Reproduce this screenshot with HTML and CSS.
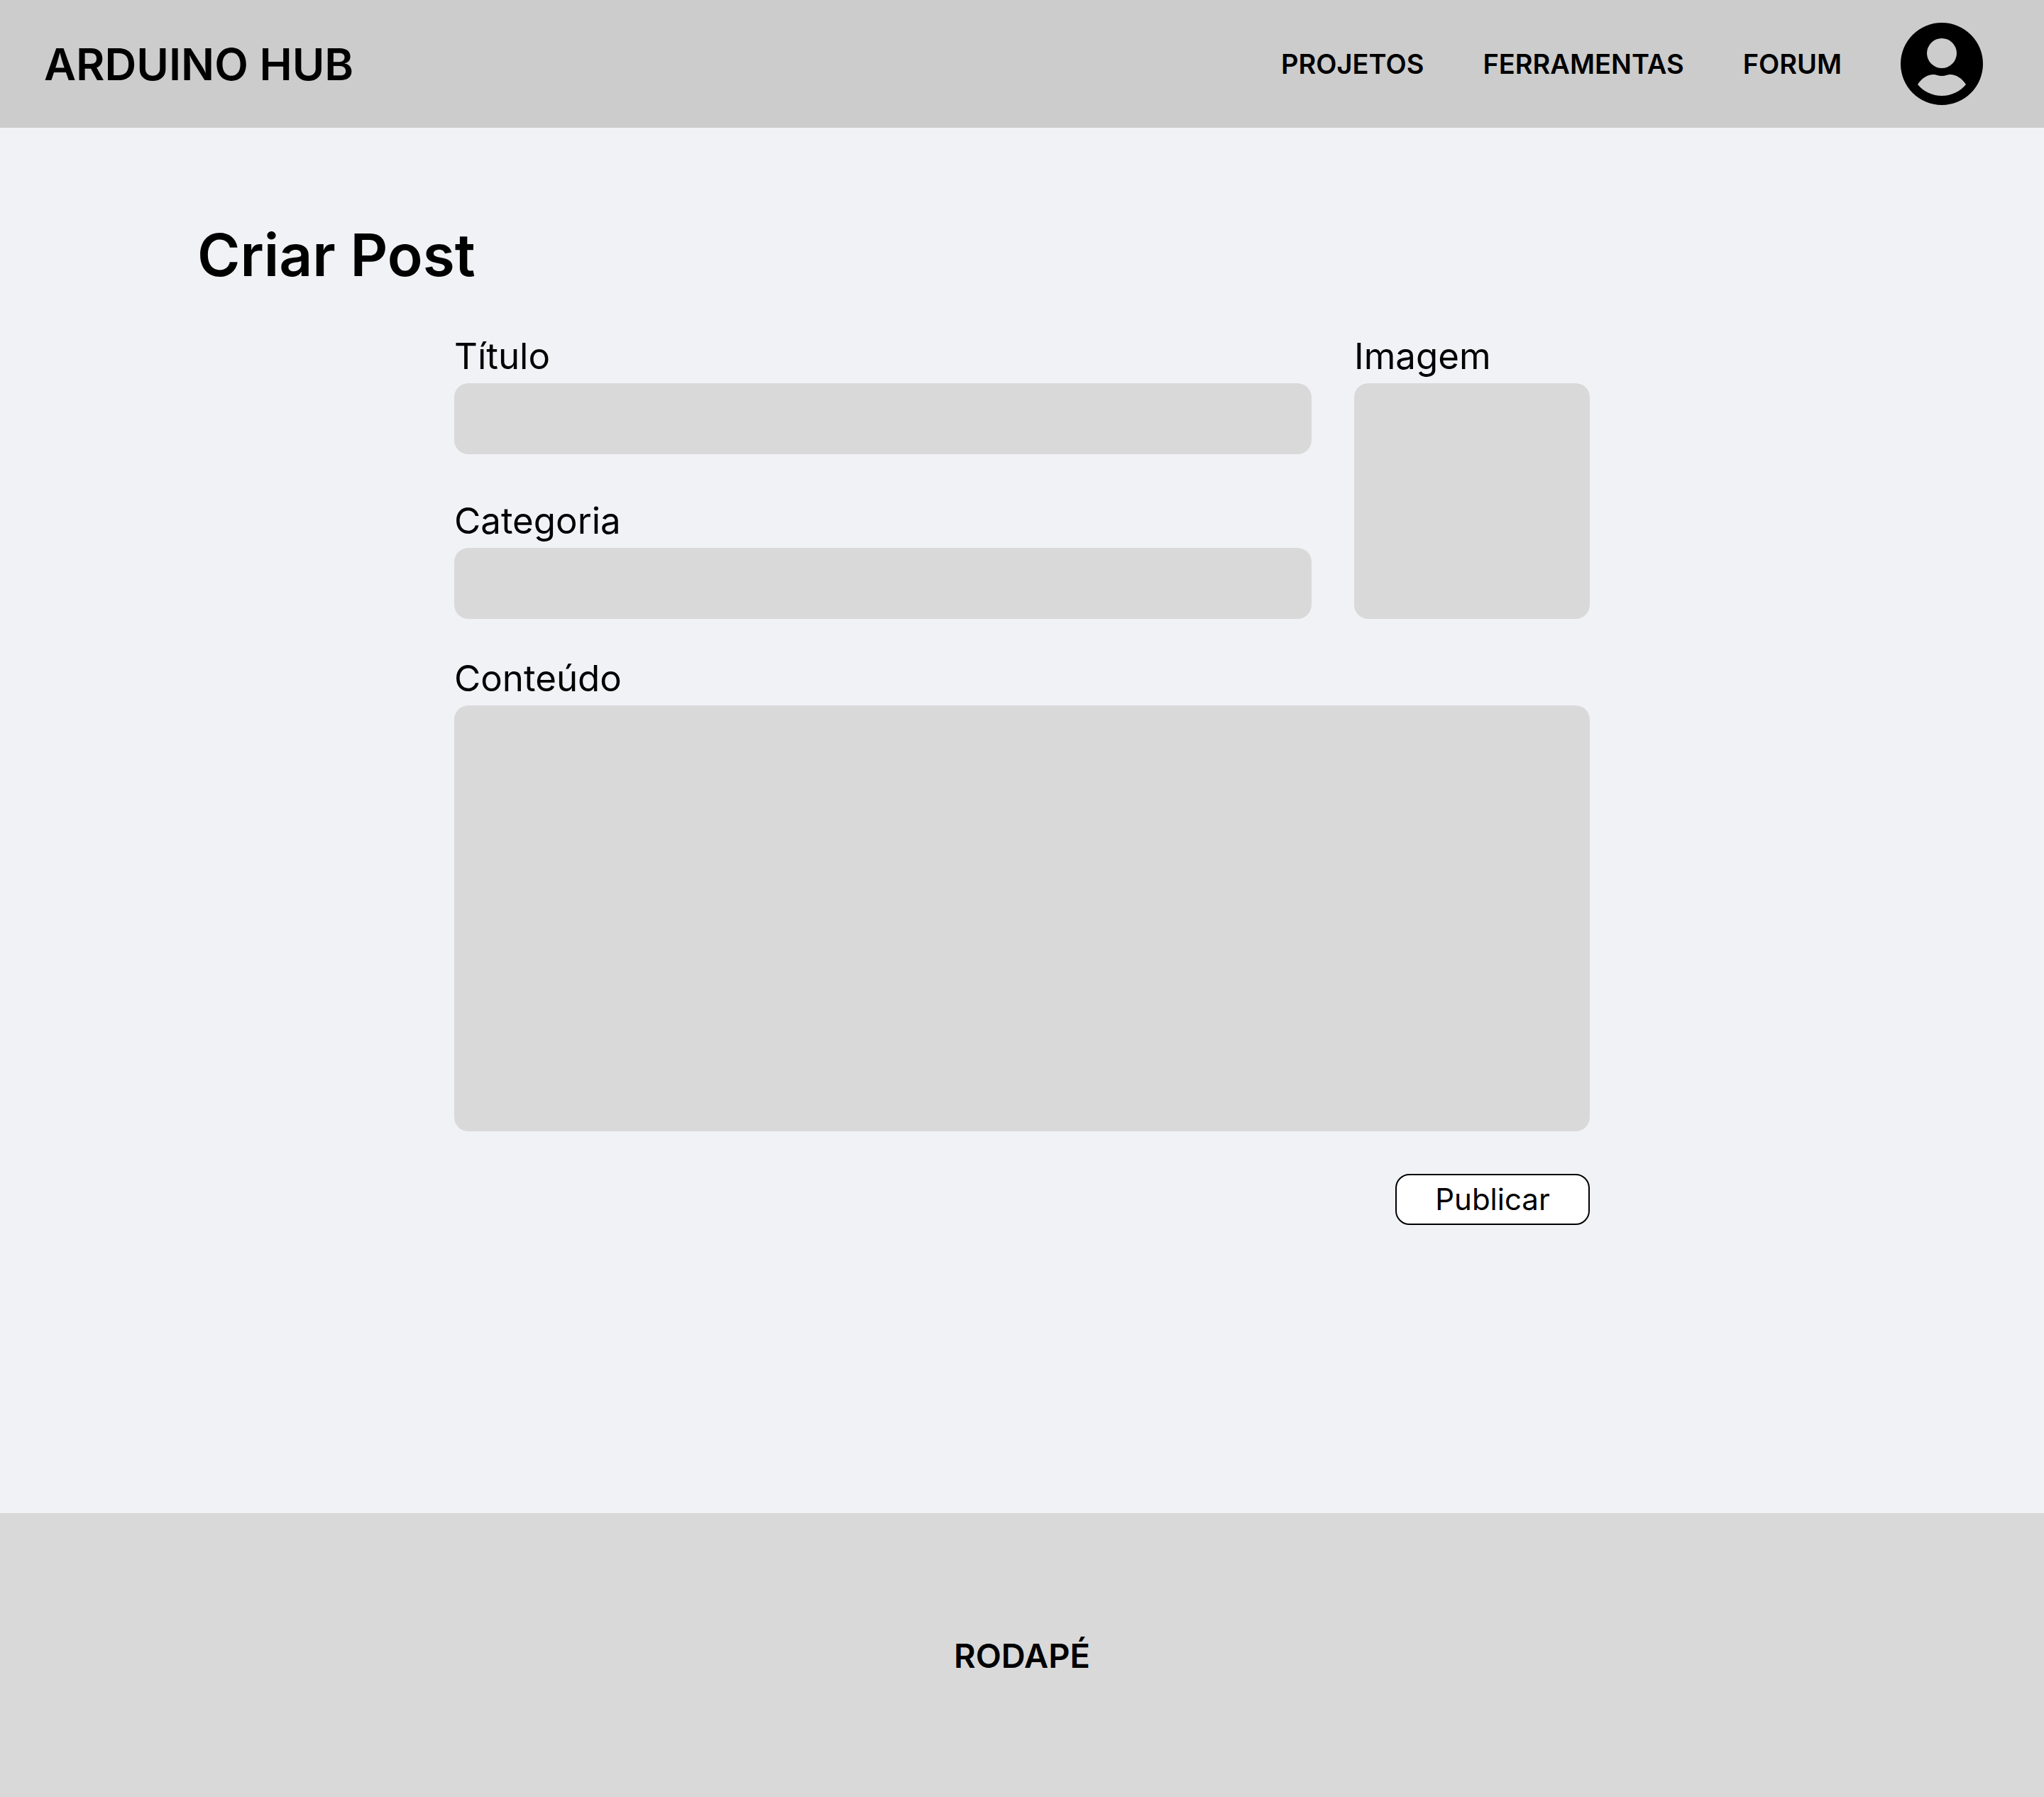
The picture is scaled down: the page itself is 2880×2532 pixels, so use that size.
FILE: index.html
```html
<!DOCTYPE html>
<html lang="pt-BR">
<head>
  <meta charset="utf-8">
  <meta name="viewport" content="width=device-width, initial-scale=1">
  <title>Criar Post - Arduino Hub</title>
  <link rel="stylesheet" href="styles.css">
</head>
<body>
  <header class="header">
    <a class="logo" href="#">ARDUINO HUB</a>
    <nav class="nav">
      <a class="nav-link" href="#">PROJETOS</a>
      <a class="nav-link" href="#">FERRAMENTAS</a>
      <a class="nav-link" href="#">FORUM</a>
      <a class="profile" href="#" aria-label="Perfil">
        <svg class="profile-icon" viewBox="0 0 116 116" aria-hidden="true">
          <path fill-rule="evenodd" d="M58 0a58 58 0 1 0 0 116a58 58 0 1 0 0-116ZM58 22a21 21 0 1 1 0 42a21 21 0 1 1 0-42ZM24 87C30 78 38 73 46 73C50 73 53 75 58 75C63 75 66 73 70 73C78 73 86 78 92 87C84 97 71 103 58 103C45 103 32 97 24 87Z"/>
        </svg>
      </a>
    </nav>
  </header>

  <main class="main">
    <h1 class="title">Criar Post</h1>
    <form class="form">
      <div class="details">
        <div class="fields">
          <div class="field">
            <label class="label" for="titulo">Título</label>
            <input class="control" id="titulo" type="text">
          </div>
          <div class="field">
            <label class="label" for="categoria">Categoria</label>
            <input class="control" id="categoria" type="text">
          </div>
        </div>
        <div class="field image-field">
          <label class="label" for="imagem">Imagem</label>
          <div class="upload">
            <input class="upload-input" id="imagem" type="file" accept="image/*">
          </div>
        </div>
      </div>
      <div class="field">
        <label class="label" for="conteudo">Conteúdo</label>
        <textarea class="control content" id="conteudo"></textarea>
      </div>
      <button class="submit" type="submit">Publicar</button>
    </form>
  </main>

  <footer class="footer">RODAPÉ</footer>
</body>
</html>
```

FILE: styles.css
```css
* {
  box-sizing: border-box;
}

body {
  display: flex;
  flex-direction: column;
  min-height: 100vh;
  margin: 0;
  background: #f1f2f6;
  color: #000;
  font-family: Inter, sans-serif;
}

.header {
  display: flex;
  align-items: center;
  justify-content: space-between;
  min-height: 180px;
  padding: 0 86px 0 62px;
  background: #ccc;
  font-weight: 600;
}

.header a {
  color: inherit;
  text-decoration: none;
}

.logo {
  font-size: 62px;
}

.nav {
  display: flex;
  align-items: center;
  gap: 83px;
  font-size: 38px;
}

.profile-icon {
  display: block;
  width: 116px;
  height: 116px;
}

.main {
  flex: 1;
  padding: 132px 278px;
}

.title {
  margin: 0 0 66px;
  font-size: 82px;
  font-weight: 600;
  line-height: 96px;
}

.form {
  display: flex;
  flex-direction: column;
  max-width: 1600px;
  margin: 0 auto;
}

.details {
  display: flex;
  gap: 60px;
  margin-bottom: 56px;
}

.fields {
  display: flex;
  flex: 1;
  flex-direction: column;
  gap: 66px;
}

.field {
  display: flex;
  flex-direction: column;
  gap: 10px;
}

.image-field {
  width: 332px;
}

.label {
  font-size: 51px;
  line-height: 56px;
}

.control,
.upload {
  border: 0;
  border-radius: 20px;
  background: #d9d9d9;
}

.control {
  width: 100%;
  height: 100px;
  padding: 20px 24px;
  font: inherit;
  font-size: 42px;
}

.content {
  height: 600px;
  resize: vertical;
}

.content::-webkit-resizer {
  display: none;
}

.upload {
  flex: 1;
  overflow: hidden;
}

.upload-input {
  width: 100%;
  height: 100%;
  opacity: 0;
}

.submit {
  align-self: flex-end;
  width: 274px;
  height: 72px;
  margin-top: 60px;
  padding: 0;
  border: 2px solid #000;
  border-radius: 20px;
  background: #fff;
  color: inherit;
  font: inherit;
  font-size: 42px;
  line-height: 64px;
}

.footer {
  display: flex;
  align-items: center;
  justify-content: center;
  min-height: 400px;
  background: #d9d9d9;
  font-size: 47px;
  font-weight: 600;
}
```
